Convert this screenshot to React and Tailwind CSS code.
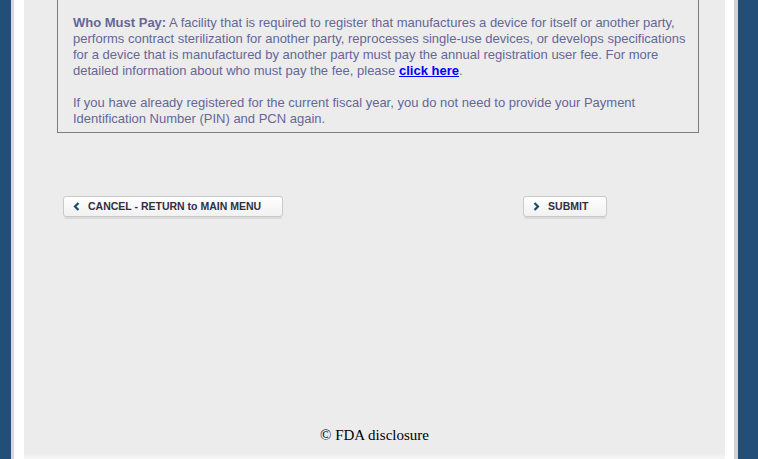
import React from "react";

function Chevron({ dir }) {
  return (
    <svg width="7" height="9" viewBox="0 0 7 9" className="shrink-0">
      {dir === "left" ? (
        <polyline points="5.5,1 2,4.5 5.5,8" fill="none" stroke="#1d4b6b" strokeWidth="2.2" />
      ) : (
        <polyline points="1.5,1 5,4.5 1.5,8" fill="none" stroke="#1d4b6b" strokeWidth="2.2" />
      )}
    </svg>
  );
}

function Btn({ dir, children, pr }) {
  return (
    <button
      className={`flex h-[21px] items-center gap-[8px] rounded-[3px] border border-[#c9c9c9] bg-gradient-to-b from-white to-[#f1f1f1] pl-[9px] ${pr} text-[10.5px] font-bold text-[#2f2f3f] shadow-[0_3px_0_-1px_#dadada]`}
      style={{ fontFamily: '"Liberation Sans", Arial, sans-serif' }}
    >
      <Chevron dir={dir} />
      <span className="leading-none">{children}</span>
    </button>
  );
}

export default function App() {
  return (
    <div className="h-[459px] w-[758px] overflow-hidden bg-[#234e77] pl-[11px]">
      <div className="flex h-full w-[727px] border-l-[3px] border-r-[4px] border-l-[#d9d9d9] border-r-[#d2d2d2] bg-white pl-[10px] pr-[9px]">
        <div className="relative flex h-full w-[701px] flex-col bg-[#ececec]">
          <div
            className="ml-[33px] w-[642px] border-x border-b border-[#7d7d7d] pb-[5px] pl-[15px] pr-[5px] pt-[15px] text-[13px] leading-[16px] text-[#666699]"
            style={{ fontFamily: '"Liberation Sans", Arial, sans-serif' }}
          >
            <p>
              <b>Who Must Pay:</b> A facility that is required to register that manufactures a device for itself or another party,
              performs contract sterilization for another party, reprocesses single-use devices, or develops specifications
              for a device that is manufactured by another party must pay the annual registration user fee. For more
              detailed information about who must pay the fee, please{" "}
              <a href="#" className="font-bold text-[#0000ff] underline">
                click here
              </a>
              .
            </p>
            <p className="mt-[16px]">
              If you have already registered for the current fiscal year, you do not need to provide your Payment
              Identification Number (PIN) and PCN again.
            </p>
          </div>
          <div className="ml-[39px] mt-[63px] flex items-center">
            <Btn dir="left" pr="pr-[21px]">CANCEL - RETURN to MAIN MENU</Btn>
            <div className="ml-[240px]">
              <Btn dir="right" pr="pr-[18px]">SUBMIT</Btn>
            </div>
          </div>
          <div className="flex-1" />
          <div
            className="mb-[15px] text-center text-[15px] leading-[17px] text-black"
            style={{ fontFamily: '"Liberation Serif", "Times New Roman", serif' }}
          >
            © FDA disclosure
          </div>
          <div className="absolute bottom-0 left-0 right-0 h-[6px] bg-gradient-to-b from-[#ececec] to-[#f7f7f7]" />
        </div>
      </div>
    </div>
  );
}
